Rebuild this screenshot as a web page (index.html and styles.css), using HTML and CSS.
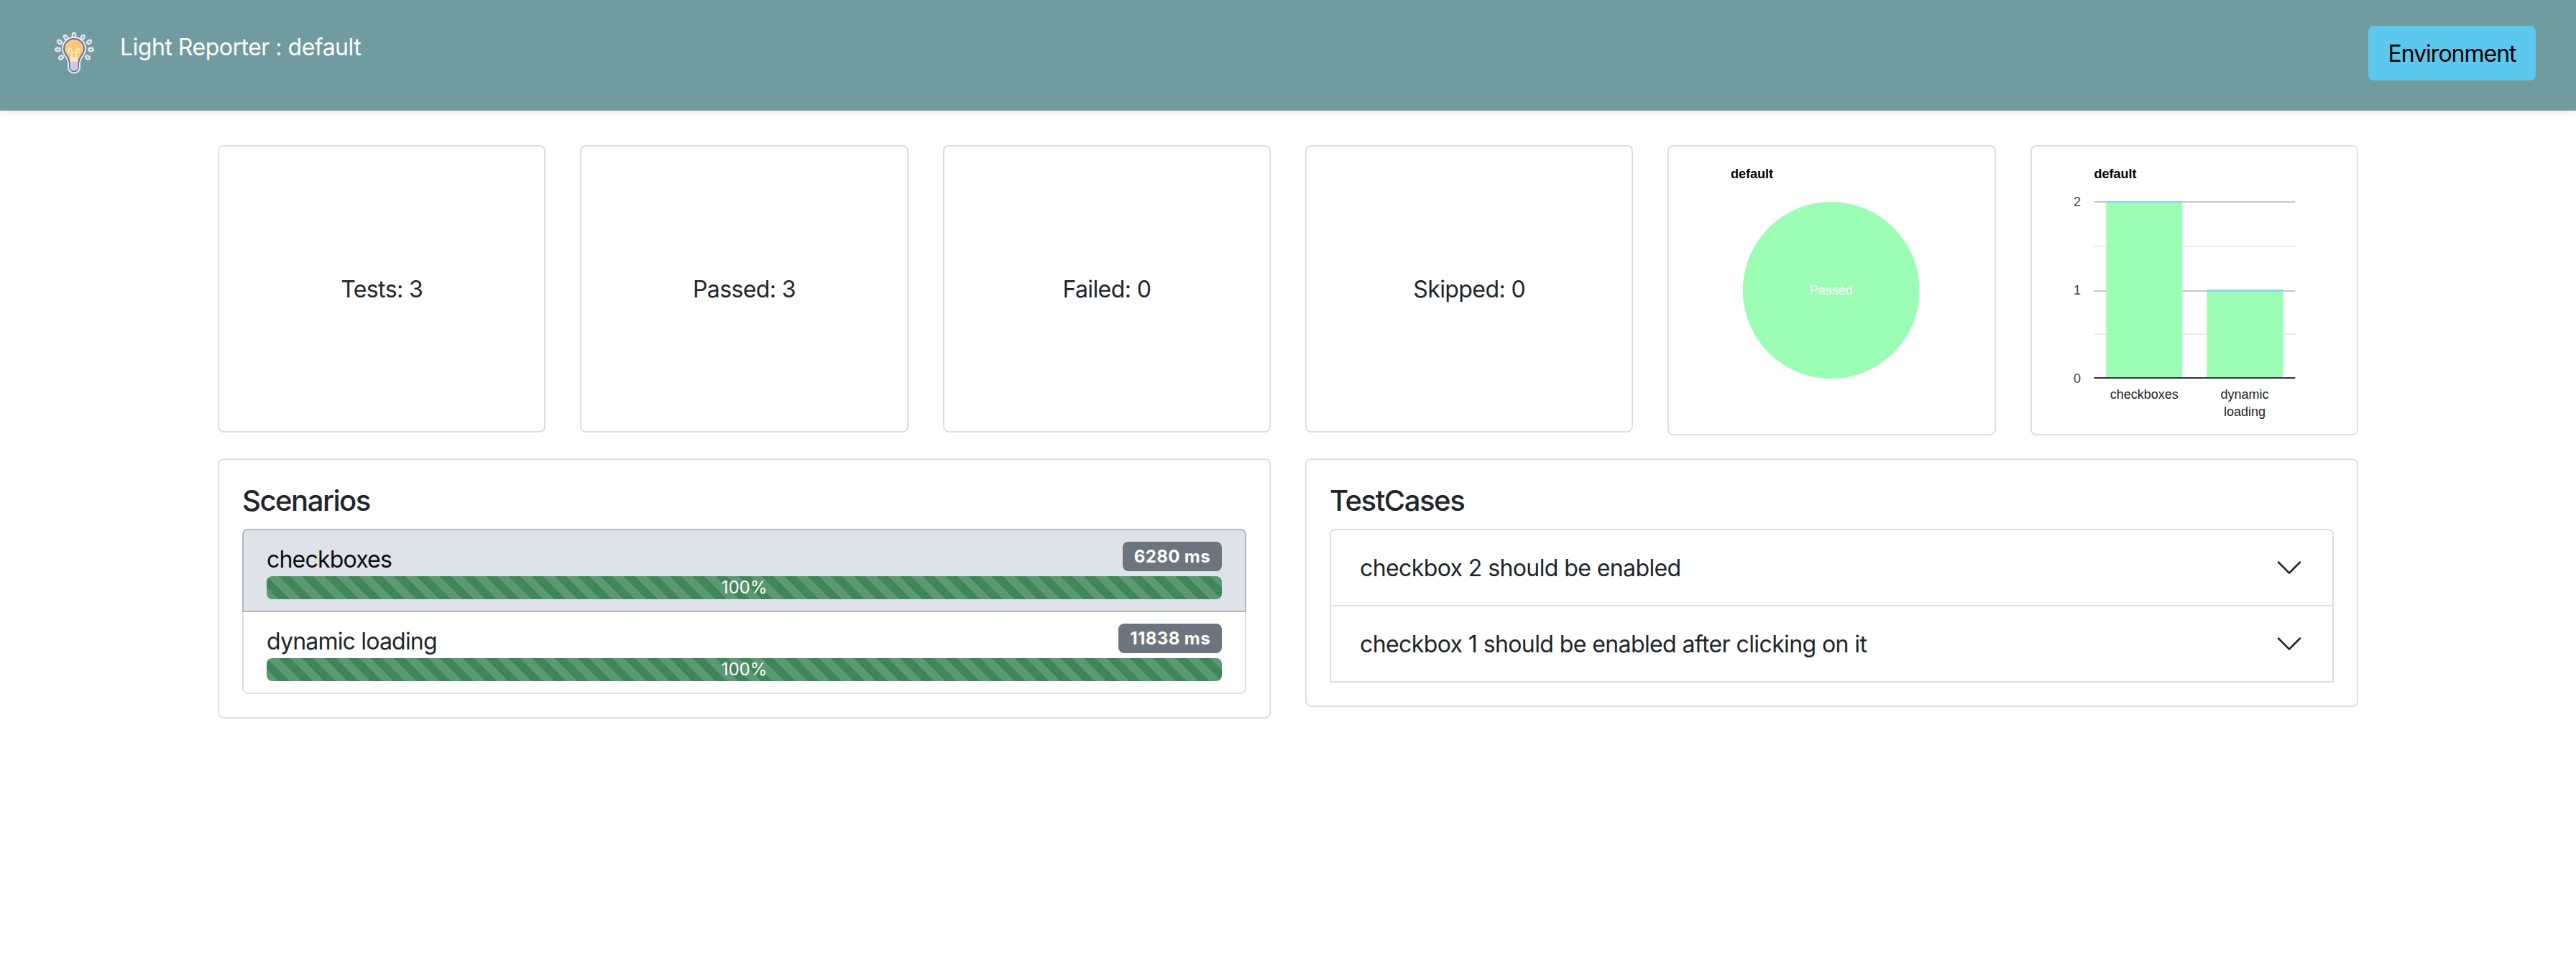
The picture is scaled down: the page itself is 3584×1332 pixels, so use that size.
FILE: index.html
```html
<!DOCTYPE html>
<html lang="en">
<head>
<meta charset="utf-8">
<title>Light Reporter</title>
<link rel="stylesheet" href="styles.css">
</head>
<body>
<header class="topbar">
  <div class="brand">
    <svg class="logo" viewBox="20 17 66 64" width="66" height="64" aria-hidden="true">
      <defs><filter id="soft" x="-10%" y="-10%" width="120%" height="120%"><feGaussianBlur stdDeviation="0.7"/></filter></defs>
      <g filter="url(#soft)">
        <g fill="#8d8bb0" stroke="#e3e6ea" stroke-width="2.4">
          <ellipse cx="53" cy="24" rx="2.2" ry="3.2"/>
          <ellipse cx="41.5" cy="27" rx="2.2" ry="3.2" transform="rotate(-28 41.5 27)"/>
          <ellipse cx="65" cy="27" rx="2.2" ry="3.2" transform="rotate(28 65 27)"/>
          <ellipse cx="33" cy="33.500" rx="2.2" ry="3.200" transform="rotate(-55 33 33.500)"/>
          <ellipse cx="74" cy="33.500" rx="2.2" ry="3.200" transform="rotate(55 74 33.500)"/>
          <ellipse cx="30.500" cy="44" rx="2.2" ry="3.200" transform="rotate(90 30.500 44)"/>
          <ellipse cx="76.500" cy="44" rx="2.2" ry="3.200" transform="rotate(90 76.500 44)"/>
          <ellipse cx="35" cy="55" rx="2.2" ry="3.200" transform="rotate(55 35 55)"/>
          <ellipse cx="72" cy="55" rx="2.200" ry="3.200" transform="rotate(-55 72 55)"/>
        </g>
        <path d="M53 27.500c-9 0-15.500 7-15.500 15.500 0 5.500 3 8.500 5 11.500 1.500 2.500 3 5 3 9v6c0 3.500 3.500 6.500 7.500 6.500s7.500-3 7.500-6.500v-6c0-4 1.500-6.500 3-9 2-3 5-6 5-11.500 0-8.500-6.500-15.500-15.500-15.500z" fill="#e6e9ec" stroke="#e6e9ec" stroke-width="3"/>
        <path d="M53 29c-8 0-14 6.300-14 14 0 5 2.700 7.700 4.800 11 1.500 2.500 3.200 5.300 3.200 9.500V69c0 3 2.700 5.500 6 5.500s6-2.500 6-5.500v-5.500c0-4.200 1.700-7 3.200-9.500 2.100-3.300 4.800-6 4.800-11 0-7.700-6-14-14-14z" fill="#fcc877" stroke="#6d6c9b" stroke-width="2"/>
        <path d="M47.500 61h11v8c0 2.500-2.500 4.500-5.500 4.500s-5.500-2-5.500-4.500z" fill="#c5cfea"/>
        <path d="M47.500 54h11v7h-11z" fill="#f7e3bd"/>
        <path d="M50 46v14M56 46v14M50 46a2.500 2.500 0 1 0-2 2h10a2.500 2.500 0 1 0-2-2" fill="none" stroke="#fdeed0" stroke-width="1.500"/>
      </g>
    </svg>
    <span class="brand-title">Light Reporter : default</span>
  </div>
  <button class="env-btn" type="button">Environment</button>
</header>

<main class="page">
  <section class="top-row">
    <div class="card stat"><span>Tests: 3</span></div>
    <div class="card stat"><span>Passed: 3</span></div>
    <div class="card stat"><span>Failed: 0</span></div>
    <div class="card stat"><span>Skipped: 0</span></div>
    <div class="card chart">
      <svg class="chart-svg" viewBox="0 0 452 400" width="452" height="400" role="img">
        <text class="chart-title" x="86" y="44">default</text>
        <circle cx="225.700" cy="200" r="123" fill="#9cfdb4"/>
        <text class="pie-label" x="225.700" y="206" text-anchor="middle">Passed</text>
      </svg>
    </div>
    <div class="card chart">
      <svg class="chart-svg" viewBox="0 0 452 400" width="452" height="400" role="img">
        <text class="chart-title" x="86.600" y="44">default</text>
        <rect class="grid-major" x="86.300" y="76" width="280" height="2"/>
        <rect class="grid-minor" x="86.300" y="138" width="280" height="2"/>
        <rect class="grid-major" x="86.300" y="200" width="280" height="2"/>
        <rect class="grid-minor" x="86.300" y="260" width="280" height="2"/>
        <rect x="103.300" y="76" width="106" height="246" fill="#9cfdb4"/>
        <rect x="103.300" y="76" width="106" height="2" fill="#8fd0fc"/>
        <rect x="243.300" y="199" width="106" height="123" fill="#9cfdb4"/>
        <rect x="243.300" y="199" width="106" height="3" fill="#8fd0fc"/>
        <rect x="86.300" y="321" width="280" height="2" fill="#333333"/>
        <text class="tick" x="68" y="83" text-anchor="end">2</text>
        <text class="tick" x="68" y="206" text-anchor="end">1</text>
        <text class="tick" x="68" y="329" text-anchor="end">0</text>
        <text class="cat" x="156.300" y="351" text-anchor="middle">checkboxes</text>
        <text class="cat" x="296" y="351" text-anchor="middle">dynamic</text>
        <text class="cat" x="296" y="375" text-anchor="middle">loading</text>
      </svg>
    </div>
  </section>

  <section class="bottom-row">
    <div class="card panel">
      <h5 class="panel-title">Scenarios</h5>
      <ul class="scenario-list">
        <li class="scenario active">
          <div class="scenario-head"><span class="scenario-name">checkboxes</span><span class="badge">6280 ms</span></div>
          <div class="progress">100%</div>
        </li>
        <li class="scenario">
          <div class="scenario-head"><span class="scenario-name">dynamic loading</span><span class="badge">11838 ms</span></div>
          <div class="progress">100%</div>
        </li>
      </ul>
    </div>
    <div class="card panel">
      <h5 class="panel-title">TestCases</h5>
      <div class="accordion">
        <div class="acc-item">
          <span class="acc-label">checkbox 2 should be enabled</span>
          <svg class="chev" viewBox="0 0 16 16" width="40" height="40" aria-hidden="true"><path fill-rule="evenodd" d="M1.646 4.646a.5.5 0 0 1 .708 0L8 10.293l5.646-5.647a.5.5 0 0 1 .708.708l-6 6a.5.5 0 0 1-.708 0l-6-6a.5.5 0 0 1 0-.708z"/></svg>
        </div>
        <div class="acc-item">
          <span class="acc-label">checkbox 1 should be enabled after clicking on it</span>
          <svg class="chev" viewBox="0 0 16 16" width="40" height="40" aria-hidden="true"><path fill-rule="evenodd" d="M1.646 4.646a.5.5 0 0 1 .708 0L8 10.293l5.646-5.647a.5.5 0 0 1 .708.708l-6 6a.5.5 0 0 1-.708 0l-6-6a.5.5 0 0 1 0-.708z"/></svg>
        </div>
      </div>
    </div>
  </section>
</main>
</body>
</html>
```
FILE: styles.css
```css
* { box-sizing: border-box; }
html, body { margin: 0; padding: 0; background: #fff; }
body {
  font-family: Inter, "Noto Sans", sans-serif;
  font-size: 32px;
  line-height: 48px;
  color: #212529;
  min-height: 1332px;
  overflow: hidden;
}

.topbar {
  display: flex;
  justify-content: space-between;
  align-items: flex-start;
  height: 154px;
  padding: 36px 56px 42px 70px;
  background: #709c9f;
  box-shadow: 0 4px 8px rgba(0, 0, 0, .075);
}
.brand { display: flex; align-items: flex-start; gap: 31px; padding-top: 6px; }
.logo { display: block; flex: none; }
.brand-title { color: #fff; font-size: 32px; line-height: 48px; letter-spacing: -.5px; }
.env-btn {
  width: 233px;
  height: 76px;
  padding: 2px 0 0;
  border: 0;
  border-radius: 8px;
  background: #5cc8ee;
  color: #000;
  font: 400 32px/48px Inter, "Noto Sans", sans-serif;
  letter-spacing: -1px;
}

.page { width: 2978px; margin: 48px auto 0; }
.top-row {
  display: grid;
  grid-template-columns: repeat(6, 1fr);
  column-gap: 48px;
  align-items: start;
}
.bottom-row {
  display: grid;
  grid-template-columns: repeat(2, 1fr);
  column-gap: 48px;
  align-items: start;
  margin-top: 32px;
}
.card {
  background: #fff;
  border: 2px solid #dfdfdf;
  border-radius: 8px;
}
.stat {
  height: 400px;
  display: flex;
  align-items: center;
  justify-content: center;
}
.stat span { padding-top: 2px; letter-spacing: -.6px; }
.chart { height: 404px; overflow: hidden; }
.chart-svg { display: block; }
.chart-svg text { font-family: "Liberation Sans", Arial, sans-serif; font-size: 18px; }
.chart-svg .chart-title { font-weight: 700; fill: #000; }
.chart-svg .pie-label { fill: #fff; }
.chart-svg .tick { fill: #444; }
.chart-svg .cat { fill: #222; }
.grid-major { fill: #c6c6c6; }
.grid-minor { fill: #ebebeb; }

.panel { padding: 32px; }
.panel-title {
  height: 48px;
  margin: 0 0 16px;
  font-size: 40px;
  font-weight: 500;
  line-height: 50px;
  letter-spacing: -1.45px;
}

.scenario-list {
  list-style: none;
  margin: 0;
  padding: 0;
}
.scenario {
  padding: 16px 32px;
  border: 2px solid #dfdfdf;
  border-top: 0;
  background: #fff;
}
.scenario:first-child { border-top: 2px solid #dfdfdf; border-radius: 8px 8px 0 0; }
.scenario:last-child { border-radius: 0 0 8px 8px; }
.scenario.active {
  background: #dee2e9;
  border-color: #b3b5bb;
  color: #0c0d0f;
}
.scenario-head {
  display: flex;
  justify-content: space-between;
  align-items: flex-start;
  height: 48px;
}
.scenario-name { line-height: 50px; letter-spacing: -.8px; }
.badge {
  padding: 8px 16px;
  border-radius: 8px;
  background: #6c757d;
  color: #fff;
  font-size: 24px;
  font-weight: 700;
  line-height: 25px;
  letter-spacing: .4px;
}
.progress {
  height: 32px;
  border-radius: 8px;
  background-color: #3f8659;
  background-image: linear-gradient(45deg, rgba(255,255,255,.15) 25%, transparent 25%, transparent 50%, rgba(255,255,255,.15) 50%, rgba(255,255,255,.15) 75%, transparent 75%, transparent);
  background-size: 32px 32px;
  color: #fff;
  font-size: 24px;
  line-height: 32px;
  text-align: center;
}

.accordion { border: 2px solid #dfdfdf; border-radius: 8px 8px 0 0; }
.acc-item {
  display: flex;
  justify-content: space-between;
  align-items: center;
  height: 104px;
  padding: 0 40px;
  line-height: 40px;
}
.acc-item + .acc-item { height: 106px; border-top: 2px solid #dfdfdf; }
.acc-label { padding-top: 2px; letter-spacing: -.6px; }
.chev { display: block; fill: #212529; }
```
